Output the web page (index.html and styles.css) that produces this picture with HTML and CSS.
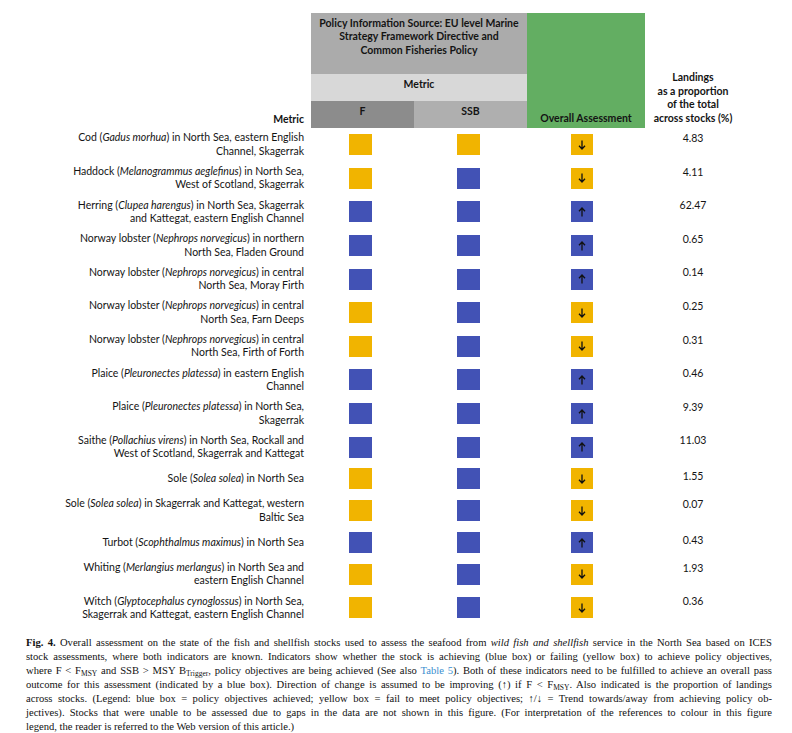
FILE: index.html
```html
<!DOCTYPE html>
<html>
<head>
<meta charset="utf-8">
<link rel="stylesheet" href="styles.css">
</head>
<body>
<div class="fig">
  <div class="head">
    <div class="h-left">Metric</div>
    <div class="h-policy">Policy Information Source: EU level Marine<br>Strategy Framework Directive and<br>Common Fisheries Policy</div>
    <div class="h-metric">Metric</div>
    <div class="h-f">F</div>
    <div class="h-ssb">SSB</div>
    <div class="h-overall">Overall Assessment</div>
    <div class="h-land">Landings<br>as a proportion<br>of the total<br>across stocks (%)</div>
  </div>

  <div class="row"><div class="lbl">Cod (<i>Gadus morhua</i>) in North Sea, eastern English<br>Channel, Skagerrak</div><div class="c cf"><span class="box y"></span></div><div class="c cs"><span class="box y"></span></div><div class="c co"><span class="box y dn"><svg viewBox="0 0 8 10"><path d="M4 0.5V9M1 5.8l3 3.2 3-3.2"/></svg></span></div><div class="val">4.83</div></div>

  <div class="row"><div class="lbl">Haddock (<i>Melanogrammus aeglefinus</i>) in North Sea,<br>West of Scotland, Skagerrak</div><div class="c cf"><span class="box y"></span></div><div class="c cs"><span class="box b"></span></div><div class="c co"><span class="box y"><svg viewBox="0 0 8 10"><path d="M4 0.5V9M1 5.8l3 3.2 3-3.2"/></svg></span></div><div class="val">4.11</div></div>

  <div class="row"><div class="lbl">Herring (<i>Clupea harengus</i>) in North Sea, Skagerrak<br>and Kattegat, eastern English Channel</div><div class="c cf"><span class="box b"></span></div><div class="c cs"><span class="box b"></span></div><div class="c co"><span class="box b"><svg viewBox="0 0 8 10"><path d="M4 9.5V1M1 4.2l3-3.2 3 3.2"/></svg></span></div><div class="val">62.47</div></div>

  <div class="row"><div class="lbl">Norway lobster (<i>Nephrops norvegicus</i>) in northern<br>North Sea, Fladen Ground</div><div class="c cf"><span class="box b"></span></div><div class="c cs"><span class="box b"></span></div><div class="c co"><span class="box b"><svg viewBox="0 0 8 10"><path d="M4 9.5V1M1 4.2l3-3.2 3 3.2"/></svg></span></div><div class="val">0.65</div></div>

  <div class="row"><div class="lbl">Norway lobster (<i>Nephrops norvegicus</i>) in central<br>North Sea, Moray Firth</div><div class="c cf"><span class="box b"></span></div><div class="c cs"><span class="box b"></span></div><div class="c co"><span class="box b"><svg viewBox="0 0 8 10"><path d="M4 9.5V1M1 4.2l3-3.2 3 3.2"/></svg></span></div><div class="val">0.14</div></div>

  <div class="row"><div class="lbl">Norway lobster (<i>Nephrops norvegicus</i>) in central<br>North Sea, Farn Deeps</div><div class="c cf"><span class="box y"></span></div><div class="c cs"><span class="box b"></span></div><div class="c co"><span class="box y"><svg viewBox="0 0 8 10"><path d="M4 0.5V9M1 5.8l3 3.2 3-3.2"/></svg></span></div><div class="val">0.25</div></div>

  <div class="row"><div class="lbl">Norway lobster (<i>Nephrops norvegicus</i>) in central<br>North Sea, Firth of Forth</div><div class="c cf"><span class="box y"></span></div><div class="c cs"><span class="box b"></span></div><div class="c co"><span class="box y"><svg viewBox="0 0 8 10"><path d="M4 0.5V9M1 5.8l3 3.2 3-3.2"/></svg></span></div><div class="val">0.31</div></div>

  <div class="row"><div class="lbl">Plaice (<i>Pleuronectes platessa</i>) in eastern English<br>Channel</div><div class="c cf"><span class="box b"></span></div><div class="c cs"><span class="box b"></span></div><div class="c co"><span class="box b"><svg viewBox="0 0 8 10"><path d="M4 9.5V1M1 4.2l3-3.2 3 3.2"/></svg></span></div><div class="val">0.46</div></div>

  <div class="row"><div class="lbl">Plaice (<i>Pleuronectes platessa</i>) in North Sea,<br>Skagerrak</div><div class="c cf"><span class="box b"></span></div><div class="c cs"><span class="box b"></span></div><div class="c co"><span class="box b"><svg viewBox="0 0 8 10"><path d="M4 9.5V1M1 4.2l3-3.2 3 3.2"/></svg></span></div><div class="val">9.39</div></div>

  <div class="row"><div class="lbl">Saithe (<i>Pollachius virens</i>) in North Sea, Rockall and<br>West of Scotland, Skagerrak and Kattegat</div><div class="c cf"><span class="box b"></span></div><div class="c cs"><span class="box b"></span></div><div class="c co"><span class="box b"><svg viewBox="0 0 8 10"><path d="M4 9.5V1M1 4.2l3-3.2 3 3.2"/></svg></span></div><div class="val">11.03</div></div>

  <div class="row one"><div class="lbl">Sole (<i>Solea solea</i>) in North Sea</div><div class="c cf"><span class="box y"></span></div><div class="c cs"><span class="box b"></span></div><div class="c co"><span class="box y"><svg viewBox="0 0 8 10"><path d="M4 0.5V9M1 5.8l3 3.2 3-3.2"/></svg></span></div><div class="val">1.55</div></div>

  <div class="row"><div class="lbl">Sole (<i>Solea solea</i>) in Skagerrak and Kattegat, western<br>Baltic Sea</div><div class="c cf"><span class="box y"></span></div><div class="c cs"><span class="box b"></span></div><div class="c co"><span class="box y"><svg viewBox="0 0 8 10"><path d="M4 0.5V9M1 5.8l3 3.2 3-3.2"/></svg></span></div><div class="val">0.07</div></div>

  <div class="row one"><div class="lbl">Turbot (<i>Scophthalmus maximus</i>) in North Sea</div><div class="c cf"><span class="box b"></span></div><div class="c cs"><span class="box b"></span></div><div class="c co"><span class="box b"><svg viewBox="0 0 8 10"><path d="M4 9.5V1M1 4.2l3-3.2 3 3.2"/></svg></span></div><div class="val">0.43</div></div>

  <div class="row"><div class="lbl">Whiting (<i>Merlangius merlangus</i>) in North Sea and<br>eastern English Channel</div><div class="c cf"><span class="box y"></span></div><div class="c cs"><span class="box b"></span></div><div class="c co"><span class="box y"><svg viewBox="0 0 8 10"><path d="M4 0.5V9M1 5.8l3 3.2 3-3.2"/></svg></span></div><div class="val">1.93</div></div>

  <div class="row"><div class="lbl">Witch (<i>Glyptocephalus cynoglossus</i>) in North Sea,<br>Skagerrak and Kattegat, eastern English Channel</div><div class="c cf"><span class="box y"></span></div><div class="c cs"><span class="box b"></span></div><div class="c co"><span class="box y"><svg viewBox="0 0 8 10"><path d="M4 0.5V9M1 5.8l3 3.2 3-3.2"/></svg></span></div><div class="val">0.36</div></div>
</div>

<div class="caption">
  <div class="ln"><b>Fig. 4.</b> Overall assessment on the state of the fish and shellfish stocks used to assess the seafood from <i>wild fish and shellfish</i> service in the North Sea based on ICES</div>
  <div class="ln">stock assessments, where both indicators are known. Indicators show whether the stock is achieving (blue box) or failing (yellow box) to achieve policy objectives,</div>
  <div class="ln">where F &lt; F<sub>MSY</sub> and SSB &gt; MSY B<sub>Trigger</sub>, policy objectives are being achieved (See also <span class="link">Table 5</span>). Both of these indicators need to be fulfilled to achieve an overall pass</div>
  <div class="ln">outcome for this assessment (indicated by a blue box). Direction of change is assumed to be improving (↑) if F &lt; F<sub>MSY</sub>. Also indicated is the proportion of landings</div>
  <div class="ln">across stocks. (Legend: blue box = policy objectives achieved; yellow box = fail to meet policy objectives; ↑/↓ = Trend towards/away from achieving policy ob-</div>
  <div class="ln">jectives). Stocks that were unable to be assessed due to gaps in the data are not shown in this figure. (For interpretation of the references to colour in this figure</div>
  <div class="ln last">legend, the reader is referred to the Web version of this article.)</div>
</div>
</body>
</html>
```
FILE: styles.css
```css
html, body {
  margin: 0;
  padding: 0;
  background: #ffffff;
}

.fig {
  --cols: 311px 103px 113px 118px 96px;
  padding-top: 13px;
  font-family: Lato, "Open Sans", sans-serif;
  font-size: 10.5px;
  color: #141414;
}

.head {
  display: grid;
  grid-template-columns: var(--cols);
  grid-template-rows: 61px 27px 27px;
  font-weight: bold;
  line-height: 13.4px;
  text-align: center;
}

.h-left {
  grid-column: 1;
  grid-row: 1 / 4;
  align-self: end;
  text-align: right;
  padding: 0 7px 2px 0;
}

.h-policy {
  grid-column: 2 / 4;
  grid-row: 1;
  background: #ababab;
  padding-top: 4px;
}

.h-metric {
  grid-column: 2 / 4;
  grid-row: 2;
  background: #d8d8d8;
  padding-top: 4px;
}

.h-f {
  grid-column: 2;
  grid-row: 3;
  background: #8c8c8c;
  padding-top: 4px;
}

.h-ssb {
  grid-column: 3;
  grid-row: 3;
  background: #afafaf;
  padding-top: 4px;
}

.h-overall {
  grid-column: 4;
  grid-row: 1 / 4;
  background: #63ae62;
  display: flex;
  align-items: flex-end;
  justify-content: center;
  padding-bottom: 3px;
}

.h-land {
  grid-column: 5;
  grid-row: 1 / 4;
  align-self: end;
  padding-bottom: 3px;
}

.row {
  display: grid;
  grid-template-columns: var(--cols);
  min-height: 30px;
  align-items: center;
  line-height: 13.4px;
}

.lbl {
  text-align: right;
  padding: 3.4px 7px 3.4px 0;
}

.c {
  display: flex;
  align-items: center;
}

.cf { padding-left: 38px; }
.cs { padding-left: 43px; }
.co { padding-left: 44px; }

.box {
  display: flex;
  align-items: center;
  justify-content: center;
  width: 23px;
  height: 21px;
}

.co .box {
  width: 22px;
}

.box.y { background: #f1b400; }
.box.b { background: #4252b5; }

.box svg {
  width: 8px;
  height: 10px;
}

.box svg path {
  fill: none;
  stroke: #111111;
  stroke-width: 1.3;
}

.val {
  align-self: start;
  text-align: center;
  padding-top: 4px;
}

.one .val {
  padding-top: 6px;
}

.caption {
  margin: 11px 20px 0 26px;
  font-family: "Liberation Serif", "Times New Roman", serif;
  font-size: 10.6px;
  line-height: 14px;
  color: #111111;
}

.ln {
  text-align: justify;
  text-align-last: justify;
  white-space: nowrap;
}

.ln.last {
  text-align-last: left;
}

.caption sub {
  font-size: 7.5px;
  line-height: 0;
  vertical-align: -2px;
}

.link {
  color: #3a8fd0;
}
```
